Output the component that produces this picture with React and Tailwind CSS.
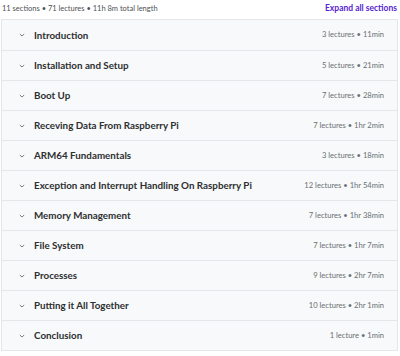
import React from "react";

const rows = [
  ["Introduction", "3 lectures • 11min"],
  ["Installation and Setup", "5 lectures • 21min"],
  ["Boot Up", "7 lectures • 28min"],
  ["Receving Data From Raspberry Pi", "7 lectures • 1hr 2min"],
  ["ARM64 Fundamentals", "3 lectures • 18min"],
  ["Exception and Interrupt Handling On Raspberry Pi", "12 lectures • 1hr 54min"],
  ["Memory Management", "7 lectures • 1hr 38min"],
  ["File System", "7 lectures • 1hr 7min"],
  ["Processes", "9 lectures • 2hr 7min"],
  ["Putting it All Together", "10 lectures • 2hr 1min"],
  ["Conclusion", "1 lecture • 1min"],
];

export default function App() {
  return (
    <div className="w-[400px] h-[356px] bg-white" style={{ fontFamily: "Lato, 'Noto Sans', sans-serif" }}>
      <div className="flex items-center justify-between h-[19px] pl-[2px] pr-[3px] pb-[2px]">
        <span className="text-[7.5px] text-[#4d5053]">11 sections • 71 lectures • 11h 8m total length</span>
        <span className="text-[8.5px] font-bold text-[#5624d0]">Expand all sections</span>
      </div>
      <div className="ml-[1px] mr-[2px] border border-[#e4e7ea] bg-[#f7f9fa]">
        {rows.map(([t, m], i) => (
          <div key={i} className={"flex items-center h-[30px] pl-[16px] pr-[13px] " + (i > 0 ? "border-t border-[#e4e7ea]" : "")}>
            <svg width="8" height="8" viewBox="0 0 8 8" className="mr-[8px]">
              <path d="M1.8 3 L4 5 L6.2 3" fill="none" stroke="#6a6f73" strokeWidth="0.9" />
            </svg>
            <span className="text-[9.8px] font-bold text-[#2d2f31] flex-1 whitespace-nowrap">{t}</span>
            <span className="text-[7.6px] text-[#6a6f73] whitespace-nowrap">{m}</span>
          </div>
        ))}
      </div>
    </div>
  );
}
